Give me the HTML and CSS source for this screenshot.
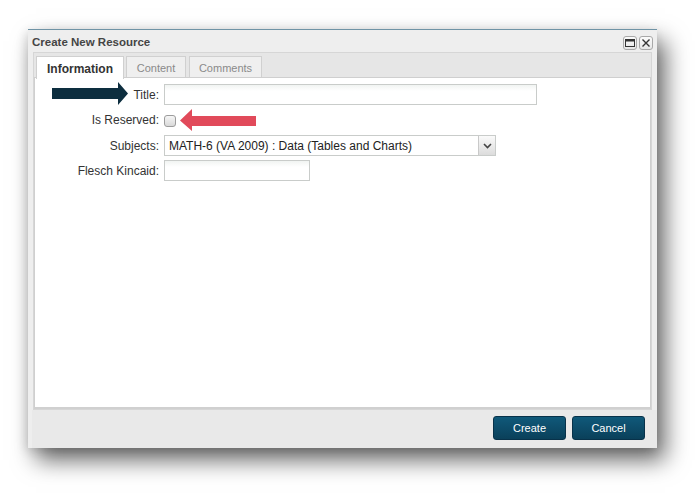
FILE: index.html
```html
<!DOCTYPE html>
<html>
<head>
<meta charset="utf-8">
<link rel="stylesheet" href="styles.css">
</head>
<body>
<div class="dialog">
  <div class="titlebar">
    <span class="title">Create New Resource</span>
    <div class="tools">
      <span class="tool"><svg width="12" height="12" viewBox="0 0 12 12"><rect x="1.5" y="2.5" width="9" height="7" fill="none" stroke="#333" stroke-width="1"/><rect x="1.5" y="2.5" width="9" height="2" fill="#333"/></svg></span>
      <span class="tool"><svg width="12" height="12" viewBox="0 0 12 12"><path d="M2.5 2.5 L9.5 9.5 M9.5 2.5 L2.5 9.5" stroke="#333" stroke-width="1.4" fill="none"/></svg></span>
    </div>
  </div>
  <div class="panel">
    <div class="tabs">
      <div class="tab active">Information</div>
      <div class="tab t-content">Content</div>
      <div class="tab t-comments">Comments</div>
    </div>
    <div class="content">
      <div class="form">
        <label class="lbl">Title:</label>
        <div class="field"><span class="input w-title"></span></div>
        <label class="lbl">Is Reserved:</label>
        <div class="field"><span class="check"></span></div>
        <label class="lbl">Subjects:</label>
        <div class="field"><span class="select"><span class="sel-text">MATH-6 (VA 2009) : Data (Tables and Charts)</span><span class="sel-btn"><svg width="9" height="6" viewBox="0 0 9 6"><path d="M1 1 L4.5 4.5 L8 1" stroke="#444" stroke-width="1.6" fill="none"/></svg></span></span></div>
        <label class="lbl">Flesch Kincaid:</label>
        <div class="field"><span class="input w-flesch"></span></div>
      </div>
    </div>
  </div>
  <div class="footer">
    <button class="btn">Create</button>
    <button class="btn">Cancel</button>
  </div>
</div>
<svg class="arrow arrow-dark" width="78" height="24" viewBox="0 0 78 24"><path d="M0 6 H66 V0 L76 11.5 L66 23 V17 H0 Z" fill="#0d2e3f"/></svg>
<svg class="arrow arrow-red" width="78" height="24" viewBox="0 0 78 24"><path d="M77 8 H13 V1 L1 12.5 L13 23 V18 H77 Z" fill="#e14a5a"/></svg>
</body>
</html>
```
FILE: styles.css
```css
html, body {
  margin: 0;
  padding: 0;
  background: #ffffff;
}
body {
  width: 695px;
  height: 502px;
  overflow: hidden;
  position: relative;
  font-family: "Liberation Sans", Arial, sans-serif;
}
.dialog {
  margin: 29px 0 0 28px;
  width: 629px;
  height: 419px;
  box-sizing: border-box;
  background: #eeeeee;
  border-top: 1px solid #6f93a5;
  box-shadow: 8px 12px 22px rgba(0,0,0,0.6), -2px 3px 10px rgba(0,0,0,0.12);
  display: flex;
  flex-direction: column;
}
.titlebar {
  height: 22px;
  display: flex;
  align-items: center;
  justify-content: space-between;
  padding: 0 4px 0 4px;
}
.title {
  font-weight: bold;
  font-size: 11.5px;
  color: #454545;
  padding-top: 2px;
}
.tools {
  display: flex;
  gap: 2px;
  padding-top: 4px;
}
.tool {
  width: 14px;
  height: 14px;
  box-sizing: border-box;
  border: 1px solid #a8a8a8;
  border-radius: 3px;
  background: linear-gradient(#fbfbfb, #e6e6e6);
  display: flex;
  align-items: center;
  justify-content: center;
}
.panel {
  margin: 0 5px;
  height: 358px;
  box-sizing: border-box;
  border: 1px solid #d6d6d6;
  background: #e6e6e6;
  display: flex;
  flex-direction: column;
}
.tabs {
  display: flex;
  gap: 2px;
  padding: 3px 0 0 2px;
  height: 25px;
  box-sizing: border-box;
}
.tab {
  height: 22px;
  box-sizing: border-box;
  border: 1px solid #d0d0d0;
  border-bottom: none;
  background: #efefef;
  color: #8a8a8a;
  font-size: 11px;
  display: flex;
  align-items: center;
  justify-content: center;
  padding: 1px 0 0;
}
.t-content { width: 60px; }
.t-comments { width: 73px; margin-left: 1px; }
.tab.active {
  background: #ffffff;
  color: #333333;
  font-weight: bold;
  font-size: 12px;
  width: 88px;
  height: 23px;
  position: relative;
  z-index: 1;
}
.content {
  flex: 1;
  background: #ffffff;
  border: 1px solid #cfcfcf;
  border-bottom: 2px solid #d0d0d0;
  margin-top: -1px;
}
.form {
  display: grid;
  grid-template-columns: 124px auto;
  grid-template-rows: 21px 22px 21px 21px;
  column-gap: 5px;
  row-gap: 4px;
  padding-top: 6px;
}
.lbl {
  font-size: 12px;
  color: #333333;
  text-align: right;
  align-self: center;
}
.field {
  display: flex;
  align-items: center;
}
.input {
  display: block;
  height: 21px;
  box-sizing: border-box;
  border: 1px solid #c9ccca;
  background: linear-gradient(#f1f4f2, #ffffff 6px);
}
.w-title { width: 373px; }
.w-flesch { width: 146px; }
.check {
  width: 12px;
  height: 12px;
  box-sizing: border-box;
  border: 1px solid #9c9c9c;
  border-radius: 3px;
  background: linear-gradient(#f6f6f6, #d9d9d9);
  margin-top: 1px;
}
.select {
  width: 332px;
  height: 21px;
  box-sizing: border-box;
  border: 1px solid #c9ccca;
  background: #ffffff;
  display: flex;
  align-items: center;
  justify-content: space-between;
}
.sel-text {
  font-size: 12px;
  color: #222;
  padding-left: 4px;
}
.sel-btn {
  width: 17px;
  height: 19px;
  box-sizing: border-box;
  border-left: 1px solid #c9c9c9;
  background: linear-gradient(#fafafa, #dcdcdc);
  display: flex;
  align-items: center;
  justify-content: center;
}
.footer {
  flex: 1;
  display: flex;
  justify-content: flex-end;
  align-items: flex-start;
  gap: 6px;
  padding: 6px 12px 0 0;
  background: #e9e9e9;
  margin: 0 0 0 4px;
}
.btn {
  width: 73px;
  height: 24px;
  border: 1px solid #08324a;
  border-radius: 3px;
  background: linear-gradient(#10597a, #0a405a);
  color: #ffffff;
  font-family: "Liberation Sans", Arial, sans-serif;
  font-size: 11px;
  padding: 0;
}
.arrow {
  position: absolute;
}
.arrow-dark {
  left: 52px;
  top: 82px;
}
.arrow-red {
  left: 179px;
  top: 108px;
}
```
